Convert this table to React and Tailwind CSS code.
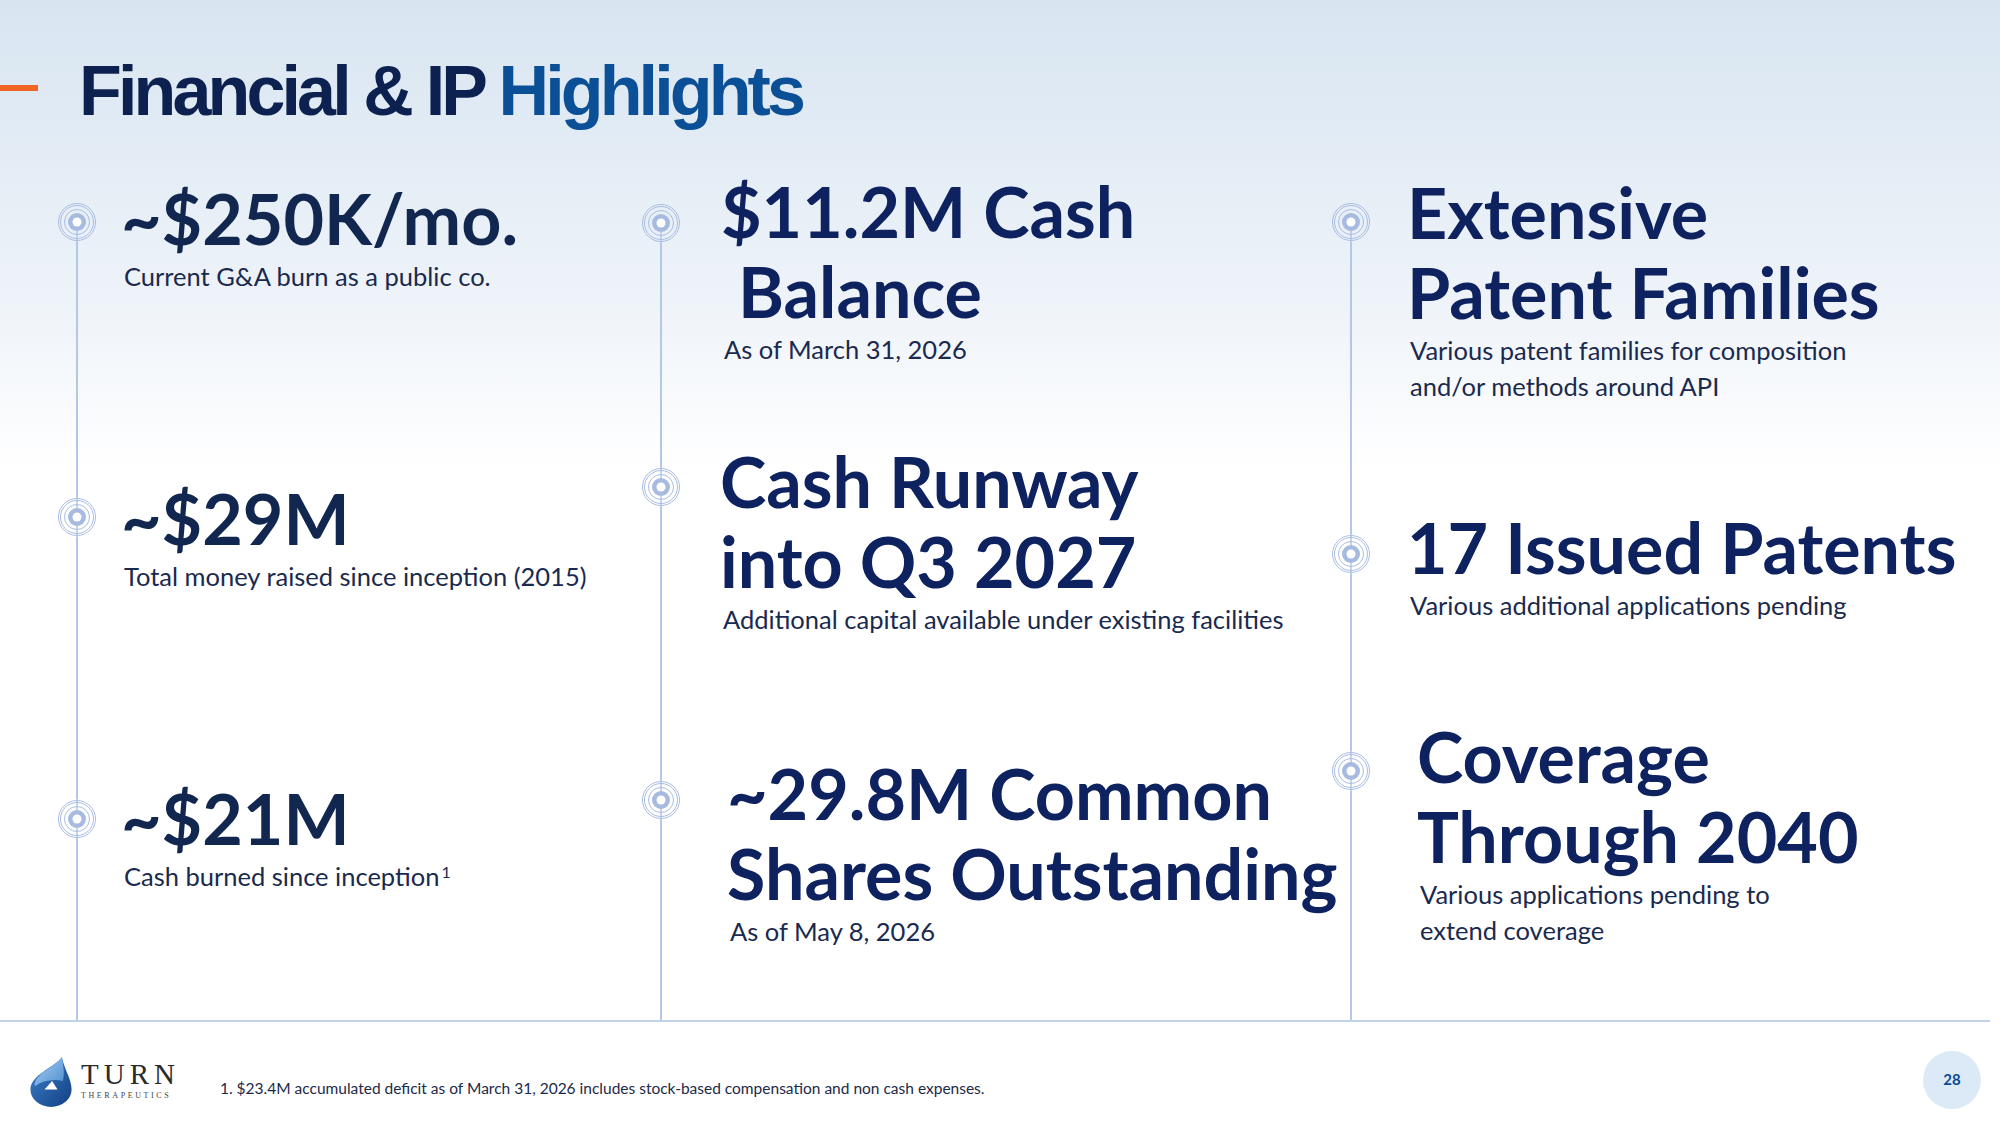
import React from 'react';

const LATO = { fontFamily: 'Lato, "Noto Sans", sans-serif' };

// timeline marker: rings round a filled dot, line running out of the bottom
const Marker = ({ first }) => (
  <svg width="40" height="40" viewBox="0 0 40 40" className="shrink-0">
    {!first && <line x1="20" y1="0" x2="20" y2="16" stroke="#b3c7e8" strokeWidth="1.5" />}
    <line x1="20" y1="24" x2="20" y2="40" stroke="#b3c7e8" strokeWidth="1.5" />
    <circle cx="20" cy="20" r="18.5" fill="none" stroke="#a9bde3" strokeWidth="1" />
    <circle cx="20" cy="20" r="16.5" fill="none" stroke="#a9bde3" strokeWidth="1" />
    <circle cx="20" cy="20" r="12.5" fill="none" stroke="#a9bde3" strokeWidth="1" />
    <circle cx="20" cy="20" r="9" fill="#a7badf" />
    <circle cx="20" cy="20" r="4.5" fill="#ffffff" />
  </svg>
);

const Item = ({ first, offset, className, indent = '', color, lines, sub }) => (
  <div className={`flex ${className}`}>
    <div className="w-[40px] flex flex-col items-center shrink-0">
      <div className={`w-[1.5px] ${first ? '' : 'bg-[#b3c7e8]'}`} style={{ height: offset - 20 }} />
      <Marker first={first} />
      <div className="w-[1.5px] flex-1 bg-[#b3c7e8]" />
    </div>
    <div className={`min-w-0 ${indent}`} style={LATO}>
      {lines.map((l, i) => (
        <div key={i} className={`text-[70px] leading-[80px] font-bold whitespace-pre ${color}`}>
          {l}
        </div>
      ))}
      <div className="text-[25.5px] leading-[36px] text-[#1a2a4e] pl-[3px]">{sub}</div>
    </div>
  </div>
);

const Logo = () => (
  <div className="flex items-center gap-[8px]">
    <svg width="44" height="52" viewBox="0 0 40 48">
      <defs>
        <linearGradient id="dropA" x1="0" y1="0" x2="1" y2="1">
          <stop offset="0" stopColor="#3f84cc" />
          <stop offset="1" stopColor="#123f82" />
        </linearGradient>
        <linearGradient id="dropB" x1="0" y1="0" x2="1" y2="1">
          <stop offset="0" stopColor="#a9cdf0" />
          <stop offset="1" stopColor="#4f8fd2" />
        </linearGradient>
      </defs>
      <path d="M30 1 C 25 10, 1 17, 1 31 A 19 16 0 0 0 39 31 C 39 21, 32 12, 30 1 Z" fill="url(#dropA)" />
      <path d="M30 1 C 25 10, 3 17, 5 28 C 12 23, 21 21, 31 23 C 33 15, 31 8, 30 1 Z" fill="url(#dropB)" />
      <path d="M14 31 L21 23 L26 31 Z" fill="#ffffff" />
    </svg>
    <div className="flex flex-col" style={{ fontFamily: '"Liberation Serif", serif' }}>
      <span className="text-[29px] leading-[26px] tracking-[5px] text-[#2b2b2b]">TURN</span>
      <span className="text-[8px] leading-[12px] tracking-[2.6px] text-[#444] mt-[3px]">THERAPEUTICS</span>
    </div>
  </div>
);

export default function App() {
  const c1 = 'text-[#12274f]';
  const c2 = 'text-[#0e2260]';
  return (
    <div className="w-[2000px] h-[1125px] flex flex-col bg-[linear-gradient(to_bottom,#d8e5f1_0px,#eef3f9_300px,#ffffff_470px)] overflow-hidden">
      {/* Header */}
      <div className="h-[150px] flex items-start pt-[51px] gap-[41px] shrink-0">
        <div className="w-[38px] h-[6px] bg-[#f06424] mt-[34px]" />
        <h1
          className="text-[70px] leading-[80px] font-bold tracking-[-0.055em]"
          style={{ fontFamily: '"Liberation Sans", Arial, sans-serif' }}
        >
          <span className="text-[#0c2150]">Financial &amp; IP </span>
          <span className="text-[#0b4f96]">Highlights</span>
        </h1>
      </div>

      {/* Columns */}
      <div className="h-[870px] grid grid-cols-[584px_690px_1fr] pl-[57px] shrink-0">
        <div className="flex flex-col pt-[28px]">
          <Item first offset={44} className="h-[300px]" indent="pl-[24px]" color={c1}
            lines={['~$250K/mo.']} sub="Current G&A burn as a public co." />
          <Item offset={39} className="h-[300px]" indent="pl-[24px]" color={c1}
            lines={['~$29M']} sub="Total money raised since inception (2015)" />
          <Item offset={41} className="flex-1" indent="pl-[24px]" color={c1}
            lines={['~$21M']}
            sub={<>Cash burned since inception<sup className="text-[16px] ml-[2px]">1</sup></>} />
        </div>
        <div className="flex flex-col pt-[21px]">
          <Item first offset={52} className="h-[270px]" indent="pl-[40px]" color={c2}
            lines={['$11.2M Cash', ' Balance']} sub="As of March 31, 2026" />
          <Item offset={46} className="h-[312px]" indent="pl-[39px]" color={c2}
            lines={['Cash Runway', 'into Q3 2027']} sub="Additional capital available under existing facilities" />
          <Item offset={47} className="flex-1" indent="pl-[46px]" color={c2}
            lines={['~29.8M Common', 'Shares Outstanding']} sub="As of May 8, 2026" />
        </div>
        <div className="flex flex-col pt-[22px]">
          <Item first offset={50} className="h-[335px]" indent="pl-[36px]" color={c2}
            lines={['Extensive', 'Patent Families']}
            sub={<div className="w-[470px]">Various patent families for composition and/or methods around API</div>} />
          <Item offset={47} className="h-[209px]" indent="pl-[36px]" color={c2}
            lines={['17 Issued Patents']} sub="Various additional applications pending" />
          <Item offset={55} className="flex-1" indent="pl-[46px]" color={c2}
            lines={['Coverage', 'Through 2040']}
            sub={<div className="w-[380px]">Various applications pending to extend coverage</div>} />
        </div>
      </div>

      <div className="h-[2px] w-[1990px] bg-[#c2d2ec] shrink-0" />

      {/* Footer */}
      <div className="flex-1 flex items-center pl-[29px] pr-[19px] pt-[16px]">
        <Logo />
        <p className="ml-[40px] mt-[14px] text-[15.5px] text-[#1b2a4a]" style={LATO}>
          1. $23.4M accumulated deficit as of March 31, 2026 includes stock-based compensation and non cash expenses.
        </p>
        <div
          className="ml-auto -mt-[4px] w-[58px] h-[58px] rounded-full bg-[#dceaf7] flex items-center justify-center text-[15px] font-bold text-[#0b4a8f]"
          style={LATO}
        >
          28
        </div>
      </div>
    </div>
  );
}
